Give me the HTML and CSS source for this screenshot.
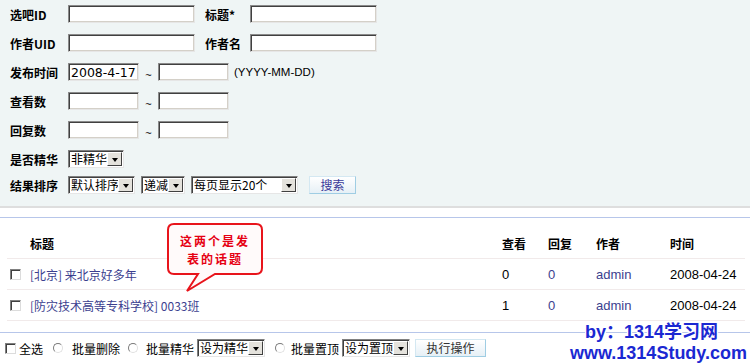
FILE: index.html
```html
<!DOCTYPE html>
<html>
<head>
  <meta charset="utf-8">
  <title>帖子管理</title>
  <link rel="stylesheet" href="styles.css">
</head>
<body>
  <div class="page">
    <div class="search">
      <div class="row">
        <span class="lbl">选吧ID</span><input class="txt w127" type="text">
        <span class="lbl lbl-s">标题*</span><input class="txt w127" type="text">
      </div>
      <div class="row">
        <span class="lbl">作者UID</span><input class="txt w127" type="text">
        <span class="lbl lbl-s">作者名</span><input class="txt w127" type="text">
      </div>
      <div class="row">
        <span class="lbl">发布时间</span><input class="txt w71" type="text" value="2008-4-17">
        <span class="tilde">~</span><input class="txt w71" type="text">
        <span class="hint">(YYYY-MM-DD)</span>
      </div>
      <div class="row">
        <span class="lbl">查看数</span><input class="txt w71" type="text">
        <span class="tilde">~</span><input class="txt w71" type="text">
      </div>
      <div class="row">
        <span class="lbl">回复数</span><input class="txt w71" type="text">
        <span class="tilde">~</span><input class="txt w71" type="text">
      </div>
      <div class="row row-tight">
        <span class="lbl">是否精华</span>
        <span class="sel w56"><select><option>非精华</option><option>精华</option></select></span>
      </div>
      <div class="row">
        <span class="lbl">结果排序</span>
        <span class="sel w67"><select><option>默认排序</option></select></span>
        <span class="sel w44 gap6"><select><option>递减</option><option>递增</option></select></span>
        <span class="sel w107 gap6"><select><option>每页显示20个</option></select></span>
        <button class="btn btn-search" type="button">搜索</button>
      </div>
    </div>

    <div class="list">
      <div class="trow thead">
        <div class="c-title">标题</div>
        <div class="c-view">查看</div>
        <div class="c-reply">回复</div>
        <div class="c-author">作者</div>
        <div class="c-time">时间</div>
      </div>
      <div class="trow">
        <div class="c-title"><input class="chk" type="checkbox"><span><a href="#">[北京]</a> <a href="#">来北京好多年</a></span></div>
        <div class="c-view">0</div>
        <div class="c-reply"><a href="#">0</a></div>
        <div class="c-author"><a href="#">admin</a></div>
        <div class="c-time">2008-04-24</div>
      </div>
      <div class="trow">
        <div class="c-title"><input class="chk" type="checkbox"><span><a href="#">[防灾技术高等专科学校]</a> <a href="#">0033班</a></span></div>
        <div class="c-view">1</div>
        <div class="c-reply"><a href="#">0</a></div>
        <div class="c-author"><a href="#">admin</a></div>
        <div class="c-time">2008-04-24</div>
      </div>
    </div>

    <div class="ops">
      <input class="chk chk-all" type="checkbox"><span class="op-txt t-all">全选</span>
      <input class="radio" type="radio" name="op"><span class="op-txt t-del">批量删除</span>
      <input class="radio" type="radio" name="op"><span class="op-txt t-sel">批量精华</span>
      <span class="sel w68"><select><option>设为精华</option></select></span>
      <input class="radio" type="radio" name="op"><span class="op-txt t-top">批量置顶</span>
      <span class="sel w68"><select><option>设为置顶</option></select></span>
      <button class="btn btn-run" type="button">执行操作</button>
    </div>

    <div class="callout">
      <svg width="100" height="72" viewBox="0 0 100 72">
        <path d="M9,3 H91 Q97,3 97,9 V47 Q97,53 91,53 H50 L22,70 L33,53 H9 Q3,53 3,47 V9 Q3,3 9,3 Z" fill="#fffafa" stroke="#e8141b" stroke-width="2"/>
      </svg>
      <div class="callout-text">
        <div>这两个是发</div>
        <div>表的话题</div>
      </div>
    </div>

    <div class="mark">
      <div class="mark-1">by：1314学习网</div>
      <div class="mark-2">www.1314Study.com</div>
    </div>
  </div>
</body>
</html>
```

FILE: styles.css
```css
body {
  margin: 0;
  font-family: "Liberation Sans", "Noto Sans CJK SC", sans-serif;
  font-size: 12px;
  color: #000;
  background: #fff;
}
a {
  color: #3c3f8f;
  text-decoration: none;
}
.page {
  position: relative;
  width: 750px;
  height: 363px;
  overflow: hidden;
}

/* search panel */
.search {
  background-color: #eff5f5;
  padding: 5px 0 12px 10px;
  border-bottom: 2px solid #dedede;
}
.row {
  display: flex;
  align-items: center;
  height: 18px;
  margin-bottom: 11px;
}
.row:last-child {
  margin-bottom: 0;
}
.row-tight {
  margin-bottom: 8px;
}
.lbl {
  width: 58px;
  font-weight: bold;
  font-family: "Noto Sans CJK SC", sans-serif;
}
.lbl-s {
  width: 45px;
  margin-left: 10px;
}
.txt {
  box-sizing: border-box;
  height: 18px;
  border: 1px solid;
  border-color: #8a8a8a #e6e6e6 #e6e6e6 #8a8a8a;
  box-shadow: inset 1px 1px 0 #404040, inset -1px -1px 0 #d4d0c8;
  background: #fff;
  padding: 0 2px;
  font-family: "DejaVu Sans", sans-serif;
  font-size: 12.5px;
  color: #000;
  outline: none;
}
.w127 { width: 127px; }
.w71 { width: 71px; }
.tilde {
  width: 19px;
  text-align: center;
  padding-top: 5px;
  font-size: 11px;
}
.hint {
  margin-left: 5px;
  font-size: 11.5px;
}

/* select boxes */
.sel {
  position: relative;
  display: inline-block;
  height: 18px;
}
.sel select {
  -webkit-appearance: none;
  appearance: none;
  box-sizing: border-box;
  width: 100%;
  height: 18px;
  margin: 0;
  padding: 0 16px 0 2px;
  border: 1px solid;
  border-color: #808080 #e6e6e6 #e6e6e6 #808080;
  box-shadow: inset 1px 1px 0 #404040;
  border-radius: 0;
  background: #fff;
  font-family: "Noto Sans CJK SC", sans-serif;
  font-size: 12px;
  line-height: 16px;
  color: #000;
  outline: none;
}
.sel:before {
  content: "";
  position: absolute;
  right: 2px;
  top: 2px;
  width: 15px;
  height: 14px;
  box-sizing: border-box;
  background: #e4e2dc;
  border: 1px solid;
  border-color: #fff #404040 #404040 #fff;
  pointer-events: none;
}
.sel:after {
  content: "";
  position: absolute;
  right: 6px;
  top: 8px;
  width: 0;
  height: 0;
  border-left: 3.5px solid transparent;
  border-right: 3.5px solid transparent;
  border-top: 4px solid #000;
  pointer-events: none;
}
.w56 { width: 56px; }
.w67 { width: 67px; }
.w44 { width: 44px; }
.w107 { width: 107px; }
.w68 { width: 68px; }
.gap6 { margin-left: 6px; }

.btn {
  box-sizing: border-box;
  height: 18px;
  padding: 0;
  border: 1px solid;
  border-color: #d4e8f2 #9fcde3 #9fcde3 #d4e8f2;
  background: linear-gradient(#ffffff, #e6f0f6);
  font-family: "Noto Sans CJK SC", sans-serif;
  font-size: 12px;
  line-height: 16px;
}
.btn-search {
  width: 47px;
  margin-left: 11px;
  color: #3a3a99;
}
.btn-run {
  width: 71px;
  margin-left: 5px;
  color: #333;
}

/* result list */
.list {
  margin-top: 9px;
  border-top: 1px solid #b7c6ea;
  border-bottom: 1px solid #b7c6ea;
  padding: 10px 5px 11px 7px;
}
.trow {
  display: flex;
  align-items: center;
  height: 30px;
  border-bottom: 1px solid #f1eaea;
}
.thead {
  font-weight: bold;
  font-family: "Noto Sans CJK SC", sans-serif;
}
.trow > div {
  box-sizing: border-box;
  padding-left: 7px;
}
.c-title {
  flex: 1;
  display: flex;
  align-items: center;
  font-family: "Noto Sans CJK SC", sans-serif;
}
.trow > .c-title {
  padding-left: 3px;
}
.thead > .c-title {
  padding-left: 23px;
}
.c-view { width: 46px; }
.c-reply { width: 48px; }
.c-author { width: 74px; }
.c-time { width: 82px; }
.trow:not(.thead) .c-view,
.trow:not(.thead) .c-reply,
.trow:not(.thead) .c-author,
.trow:not(.thead) .c-time {
  font-size: 13px;
}

.chk {
  -webkit-appearance: none;
  appearance: none;
  box-sizing: border-box;
  width: 11px;
  height: 11px;
  margin: 0 9px 0 0;
  border: 1px solid;
  border-color: #808080 #dcdcdc #dcdcdc #808080;
  box-shadow: inset 1px 1px 0 #404040;
  background: #fff;
}
.radio {
  -webkit-appearance: none;
  appearance: none;
  box-sizing: border-box;
  width: 10px;
  height: 10px;
  margin: 0;
  border-radius: 50%;
  border: 1px solid;
  border-color: #7a7a7a #e0e0e0 #e0e0e0 #7a7a7a;
  background: #fff;
}

/* bottom operations */
.ops {
  display: flex;
  align-items: center;
  height: 30px;
  padding-left: 5px;
  font-family: "Noto Sans CJK SC", sans-serif;
}
.chk-all {
  margin-right: 3px;
}
.t-all {
  margin-right: 10px;
}
.t-del {
  margin: 0 8px 0 9px;
}
.t-sel {
  margin: 0 3px 0 8px;
}
.t-top {
  margin: 0 3px 0 6px;
}
.ops .sel + .radio {
  margin-left: 10px;
}
.btn-run {
  margin-left: 5px;
}

/* note bubble */
.callout {
  position: absolute;
  left: 165px;
  top: 221px;
  width: 100px;
  height: 72px;
}
.callout svg {
  position: absolute;
  left: 0;
  top: 0;
}
.callout-text {
  position: relative;
  padding-top: 11px;
  text-align: center;
  font-family: "Noto Sans CJK SC", sans-serif;
  font-size: 12px;
  font-weight: bold;
  line-height: 18px;
  letter-spacing: 2px;
  color: #e60012;
}
.callout-text div {
  height: 18px;
}

/* watermark */
.mark {
  position: absolute;
  left: 0;
  top: 0;
  font-family: "Liberation Sans", "Noto Sans CJK SC", sans-serif;
  font-weight: bold;
  font-size: 18px;
  line-height: 20px;
  color: #1b28d2;
  text-shadow: 1px 0 0 #fff, -1px 0 0 #fff, 0 1px 0 #fff, 0 -1px 0 #fff,
    1px 1px 0 #fff, -1px -1px 0 #fff, 1px -1px 0 #fff, -1px 1px 0 #fff;
  white-space: nowrap;
}
.mark-1 {
  position: absolute;
  left: 585px;
  top: 322px;
}
.mark-2 {
  position: absolute;
  left: 570px;
  top: 343px;
}
```
